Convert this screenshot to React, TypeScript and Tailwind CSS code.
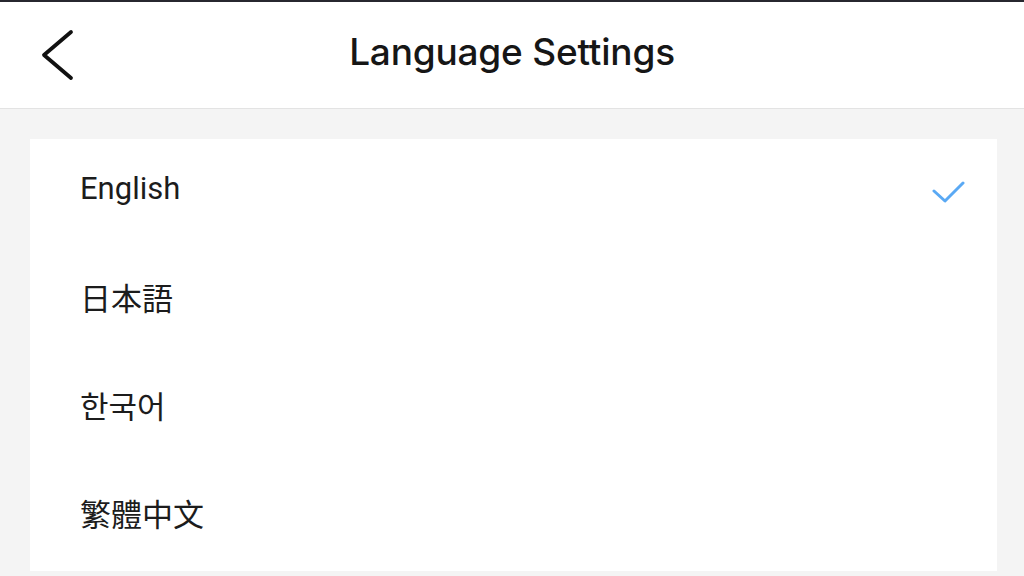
import React, { useState } from 'react';

const LANGUAGES = [
  { id: 'en', label: 'English', font: "Roboto, 'Noto Sans', sans-serif" },
  { id: 'ja', label: '日本語', font: "'Noto Sans CJK JP', sans-serif" },
  { id: 'ko', label: '한국어', font: "'Noto Sans CJK KR', sans-serif" },
  { id: 'zh', label: '繁體中文', font: "'Noto Sans CJK TC', sans-serif" },
];

const BackIcon = () => (
  <svg width="34" height="52" viewBox="0 0 34 52" fill="none">
    <path d="M31 3 L4 26 L31 49" stroke="#111" strokeWidth="3.8" strokeLinecap="round" strokeLinejoin="round" />
  </svg>
);

const CheckIcon = () => (
  <svg width="34" height="24" viewBox="0 0 34 24" fill="none">
    <path d="M2 10 L13 20 L31 2" stroke="#5aa9f4" strokeWidth="3" strokeLinecap="round" strokeLinejoin="round" />
  </svg>
);

export default function App() {
  const [selected, setSelected] = useState('en');

  return (
    <div className="w-[1024px] h-[576px] overflow-hidden bg-[#f4f4f4] flex flex-col">
      {/* top edge */}
      <div className="h-[2px] bg-[#27272f]" />

      {/* header */}
      <div className="h-[107px] bg-white border-b border-[#e3e3e3] flex items-center relative">
        <button className="ml-[40px] flex items-center">
          <BackIcon />
        </button>
        <h1
          className="absolute left-0 right-0 text-center text-[37px] font-medium text-[#161616] pointer-events-none pb-[6px] tracking-[-0.2px]"
          style={{ fontFamily: "Inter, 'Noto Sans', sans-serif" }}
        >
          Language Settings
        </h1>
      </div>

      {/* list */}
      <div className="pt-[30px] pl-[30px]">
        <div className="w-[967px] bg-white flex flex-col">
          {LANGUAGES.map(lang => (
            <div
              key={lang.id}
              onClick={() => setSelected(lang.id)}
              className="h-[108px] flex items-center justify-between pl-[50px] pr-[31px] cursor-pointer"
            >
              <span
                className="text-[31px] text-[#1c1c1c] pb-[7px]"
                style={{ fontFamily: lang.font }}
              >
                {lang.label}
              </span>
              {selected === lang.id && <CheckIcon />}
            </div>
          ))}
        </div>
      </div>
    </div>
  );
}
